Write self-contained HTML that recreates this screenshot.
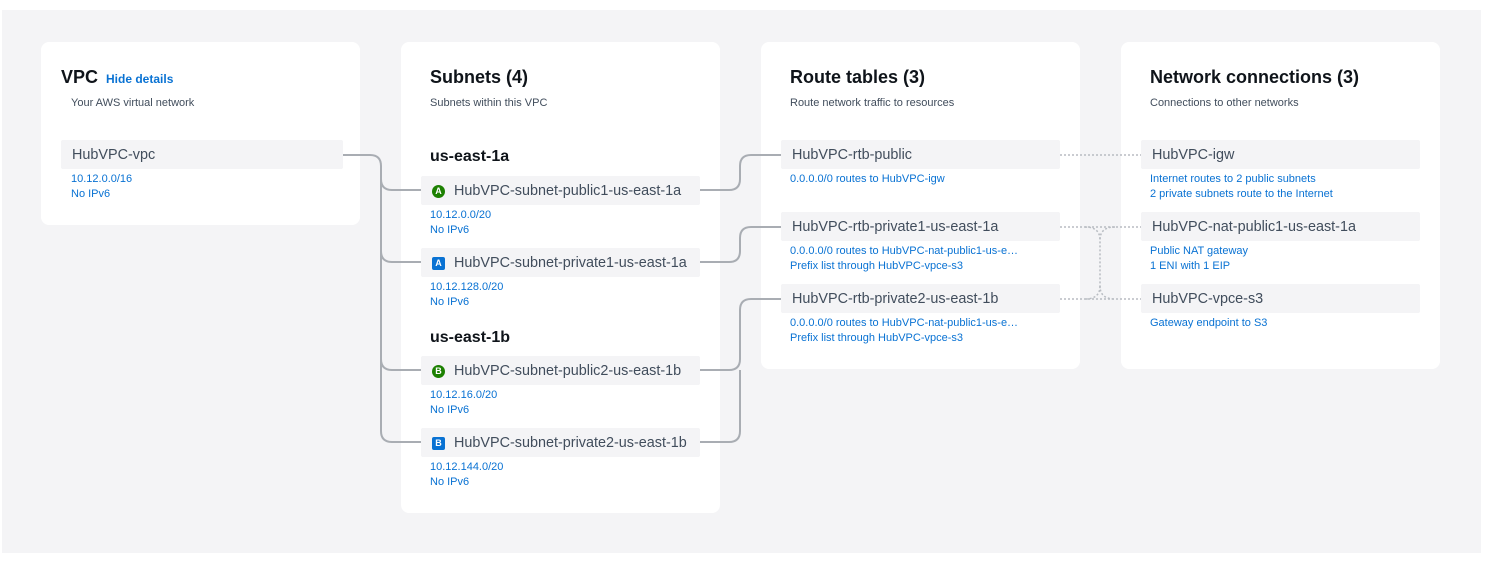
<!DOCTYPE html><html><head><meta charset="utf-8"><style>
body{margin:0;width:1490px;height:563px;background:#fff;font-family:"Liberation Sans",sans-serif;position:relative;overflow:hidden}
.bg{position:absolute;left:2px;top:10px;width:1479px;height:543px;background:#f4f4f6}
.card{position:absolute;background:#fff;border-radius:8px}
.t{position:absolute;font-size:18px;font-weight:bold;color:#0f141a;white-space:nowrap}
.s{position:absolute;font-size:11px;color:#414d5c;white-space:nowrap}
.it{position:absolute;background:#f4f4f6;height:29px;font-size:14.4px;color:#414d5c;line-height:31px;padding-left:11px;box-sizing:border-box;white-space:nowrap;border-radius:2px}
.l{position:absolute;font-size:11px;color:#0972d3;line-height:15px;white-space:nowrap}
.az{position:absolute;font-size:16px;font-weight:bold;color:#0f141a}
.bd{display:inline-block;width:13px;height:13px;color:#fff;font-size:9px;font-weight:bold;text-align:center;line-height:13px;vertical-align:1px;margin-right:9px;margin-left:0}
.g{background:#1d8102;border-radius:50%}.b{background:#0972d3;border-radius:2px}
</style></head><body>
<div class="bg"></div>
<div class="card" style="left:41px;top:42px;width:319px;height:183px"></div>
<div class="card" style="left:401px;top:42px;width:319px;height:471px"></div>
<div class="card" style="left:761px;top:42px;width:319px;height:327px"></div>
<div class="card" style="left:1121px;top:42px;width:319px;height:327px"></div>
<svg style="position:absolute;left:0;top:0" width="1490" height="563" fill="none">
<g stroke="#a9adb3" stroke-width="2">
<path d="M343 155H370Q381 155 381 166V431Q381 442 392 442H421"/>
<path d="M381 179Q381 190 392 190H421M381 251Q381 262 392 262H421M381 359Q381 370 392 370H421"/>
<path d="M700 190H729Q740 190 740 179V166Q740 155 751 155H781"/>
<path d="M700 262H729Q740 262 740 251V238Q740 227 751 227H781"/>
<path d="M700 370H729Q740 370 740 359V310Q740 299 751 299H781"/>
<path d="M700 442H729Q740 442 740 431V370"/>
</g>
<g stroke="#b8bcc2" stroke-width="1.5" stroke-dasharray="2 2">
<path d="M1060 155H1141M1060 227H1141M1060 299H1141"/>
<path d="M1085 227Q1100 227 1100 240V286Q1100 299 1115 299"/>
<path d="M1115 227Q1100 227 1100 240M1100 286Q1100 299 1085 299"/>
</g></svg>
<div class="t" style="left:61px;top:67px">VPC <span style="font-size:12px;color:#0972d3;margin-left:3px">Hide details</span></div>
<div class="s" style="left:71px;top:97px">Your AWS virtual network</div>
<div class="it" style="left:61px;top:140px;width:282px">HubVPC-vpc</div>
<div class="l" style="left:71px;top:172px">10.12.0.0/16<br>No IPv6</div>

<div class="t" style="left:430px;top:67px">Subnets (4)</div>
<div class="s" style="left:430px;top:97px">Subnets within this VPC</div>
<div class="az" style="left:430px;top:148px">us-east-1a</div>
<div class="it" style="left:421px;top:176px;width:279px;padding-left:11px"><span class="bd g">A</span>HubVPC-subnet-public1-us-east-1a</div>
<div class="l" style="left:430px;top:208px">10.12.0.0/20<br>No IPv6</div>
<div class="it" style="left:421px;top:248px;width:279px"><span class="bd b">A</span>HubVPC-subnet-private1-us-east-1a</div>
<div class="l" style="left:430px;top:280px">10.12.128.0/20<br>No IPv6</div>
<div class="az" style="left:430px;top:329px">us-east-1b</div>
<div class="it" style="left:421px;top:356px;width:279px"><span class="bd g">B</span>HubVPC-subnet-public2-us-east-1b</div>
<div class="l" style="left:430px;top:388px">10.12.16.0/20<br>No IPv6</div>
<div class="it" style="left:421px;top:428px;width:279px"><span class="bd b">B</span>HubVPC-subnet-private2-us-east-1b</div>
<div class="l" style="left:430px;top:460px">10.12.144.0/20<br>No IPv6</div>

<div class="t" style="left:790px;top:67px">Route tables (3)</div>
<div class="s" style="left:790px;top:97px">Route network traffic to resources</div>
<div class="it" style="left:781px;top:140px;width:279px">HubVPC-rtb-public</div>
<div class="l" style="left:790px;top:172px">0.0.0.0/0 routes to HubVPC-igw</div>
<div class="it" style="left:781px;top:212px;width:279px">HubVPC-rtb-private1-us-east-1a</div>
<div class="l" style="left:790px;top:244px">0.0.0.0/0 routes to HubVPC-nat-public1-us-e…<br>Prefix list through HubVPC-vpce-s3</div>
<div class="it" style="left:781px;top:284px;width:279px">HubVPC-rtb-private2-us-east-1b</div>
<div class="l" style="left:790px;top:316px">0.0.0.0/0 routes to HubVPC-nat-public1-us-e…<br>Prefix list through HubVPC-vpce-s3</div>

<div class="t" style="left:1150px;top:67px">Network connections (3)</div>
<div class="s" style="left:1150px;top:97px">Connections to other networks</div>
<div class="it" style="left:1141px;top:140px;width:279px">HubVPC-igw</div>
<div class="l" style="left:1150px;top:172px">Internet routes to 2 public subnets<br>2 private subnets route to the Internet</div>
<div class="it" style="left:1141px;top:212px;width:279px">HubVPC-nat-public1-us-east-1a</div>
<div class="l" style="left:1150px;top:244px">Public NAT gateway<br>1 ENI with 1 EIP</div>
<div class="it" style="left:1141px;top:284px;width:279px">HubVPC-vpce-s3</div>
<div class="l" style="left:1150px;top:316px">Gateway endpoint to S3</div>
</body></html>
